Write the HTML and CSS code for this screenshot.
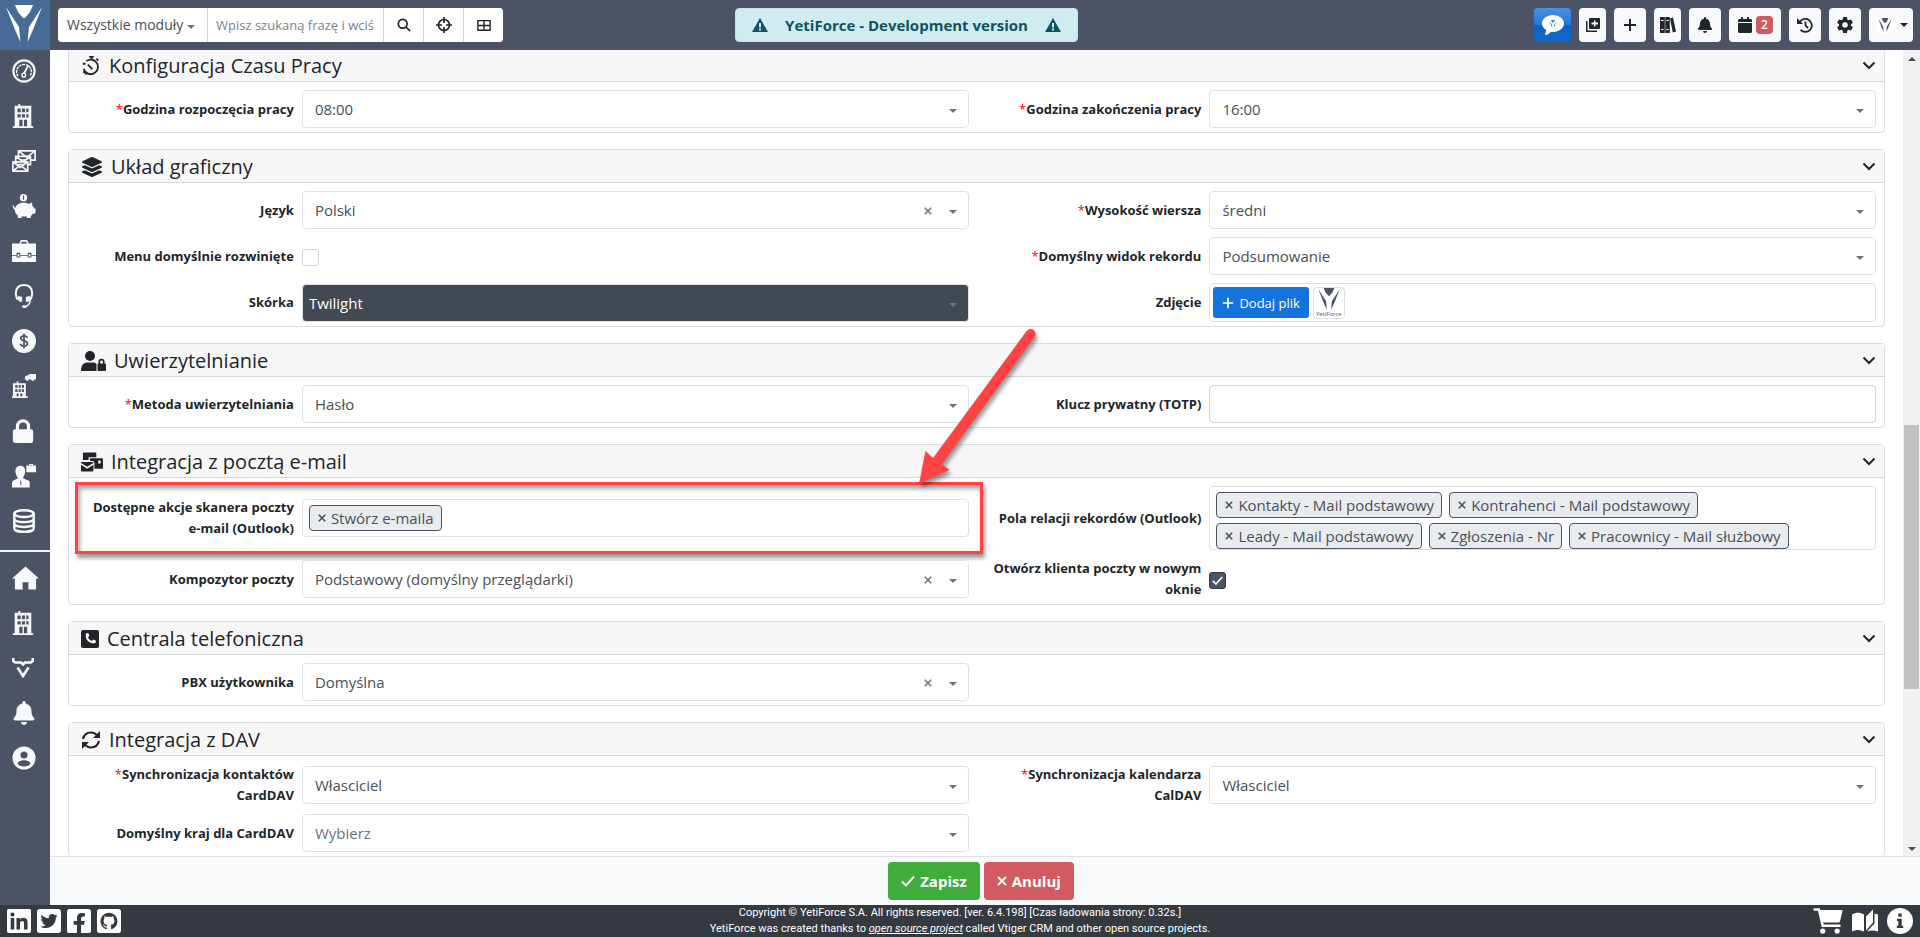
FILE: index.html
```html
<!DOCTYPE html>
<html lang="pl">
<head>
<meta charset="utf-8">
<title>YetiForce</title>
<link rel="stylesheet" href="styles.css">
</head>
<body>
<svg class="sprite" aria-hidden="true">
  <symbol id="yeti" viewBox="0 0 36 37"><path d="M9 0h18l-3 7-5 6h-2l-5-6zM0 2l13 20 1.500 15L9.500 26zM36 2L23 22l-1.500 15 5-11z"/></symbol>
  <symbol id="caret" viewBox="0 0 8 4"><path d="M0 0h8L4 4z"/></symbol>
  <symbol id="chevron" viewBox="0 0 14 9"><path d="M1.500 1.500L7 7l5.500-5.500" fill="none" stroke="currentColor" stroke-width="2"/></symbol>
  <symbol id="cross" viewBox="0 0 10 10"><path d="M1 1l8 8M9 1L1 9" fill="none" stroke="currentColor" stroke-width="2"/></symbol>
  <symbol id="check" viewBox="0 0 14 11"><path d="M1 6l4 4 8-9" fill="none" stroke="currentColor" stroke-width="2"/></symbol>
  <symbol id="plus" viewBox="0 0 14 14"><path d="M7 1v12M1 7h12" fill="none" stroke="currentColor" stroke-width="2"/></symbol>
  <symbol id="search" viewBox="0 0 16 16"><g fill="none" stroke="currentColor" stroke-width="2"><circle cx="6.500" cy="6.500" r="5"/><path d="M10 10l5 5"/></g></symbol>
  <symbol id="target" viewBox="0 0 16 16"><g fill="none" stroke="currentColor" stroke-width="1.700"><circle cx="8" cy="8" r="5.500"/><path d="M8 0v6M8 10v6M0 8h6M10 8h6"/></g></symbol>
  <symbol id="grid" viewBox="0 0 16 14"><path d="M1 2h14v11H1zM8 2v11M1 7.500h14" fill="none" stroke="currentColor" stroke-width="1.600"/></symbol>
  <symbol id="warn" viewBox="0 0 16 14"><path fill-rule="evenodd" d="M8 0l8 14H0zM7 5v4.500h2V5zM7 10.500v2h2v-2z"/></symbol>
  <symbol id="chat" viewBox="0 0 22 20"><path d="M11 0c6 0 11 3.600 11 8.500S17 17 11 17l-2-.2C7.500 18.500 5.500 20 3 20l1.200-5C1.600 13.500 0 11.200 0 8.500 0 3.600 5 0 11 0z"/></symbol>
  <symbol id="addbox" viewBox="0 0 14 14"><path fill-rule="evenodd" d="M4 0h9a1 1 0 0 1 1 1v9a1 1 0 0 1-1 1H4a1 1 0 0 1-1-1V1a1 1 0 0 1 1-1zm4 2.500v2H5.500v2H8v2h1.500v-2H12v-2H9.500v-2zM0 3h1.500v9.500H11V14H0z"/></symbol>
  <symbol id="books" viewBox="0 0 16 16"><path fill-rule="evenodd" d="M0 0h4.800v16H0zM1 3v1h2.500V3zM1 12v1h2.500v-1zM5.300 0h4.500v16H5.300zm1 3v1h2.300V3zm0 9v1h2.300v-1zM10 1.500L13 .5l3 14-3.200 1z"/></symbol>
  <symbol id="bell" viewBox="0 0 448 512"><path d="M224 512c35.320 0 63.970-28.650 63.970-64H160.030c0 35.350 28.650 64 63.970 64zm215.390-149.710c-19.320-20.760-55.470-51.990-55.470-154.290 0-77.700-54.480-139.900-127.940-155.160V32c0-17.670-14.320-32-31.980-32s-31.980 14.330-31.980 32v20.840C118.560 68.100 64.080 130.300 64.080 208c0 102.300-36.150 133.530-55.470 154.290-6 6.450-8.660 14.160-8.610 21.710.11 16.400 12.980 32 32.100 32h383.800c19.120 0 32-15.600 32.100-32 .05-7.550-2.610-15.270-8.610-21.710z"/></symbol>
  <symbol id="calendar" viewBox="0 0 448 512"><path d="M12 192h424c6.600 0 12 5.400 12 12v260c0 26.500-21.500 48-48 48H48c-26.500 0-48-21.500-48-48V204c0-6.600 5.400-12 12-12zm436-44v-36c0-26.500-21.500-48-48-48h-48V12c0-6.600-5.400-12-12-12h-40c-6.600 0-12 5.400-12 12v52H160V12c0-6.600-5.400-12-12-12h-40c-6.600 0-12 5.400-12 12v52H48C21.500 64 0 85.500 0 112v36c0 6.600 5.400 12 12 12h424c6.600 0 12-5.400 12-12z"/></symbol>
  <symbol id="history" viewBox="0 0 16 16"><g fill="none" stroke="currentColor" stroke-width="1.800"><path d="M2.500 5.500A6.500 6.500 0 1 1 3.500 12.800M8.500 4.500v4L11 11"/></g><path d="M0 1v6h6z"/></symbol>
  <symbol id="cog" viewBox="2 2 20 20"><path d="M12 15.500A3.500 3.500 0 0 1 8.500 12 3.500 3.500 0 0 1 12 8.500a3.500 3.500 0 0 1 3.500 3.500 3.500 3.500 0 0 1-3.500 3.500m7.430-2.530c.04-.32.07-.64.07-.97 0-.33-.03-.66-.07-1l2.110-1.630c.19-.15.24-.42.12-.64l-2-3.460c-.12-.22-.39-.31-.61-.22l-2.490 1c-.52-.39-1.060-.73-1.690-.98l-.37-2.650A.506.506 0 0 0 14 2h-4c-.25 0-.46.18-.5.42l-.37 2.650c-.63.25-1.170.59-1.690.98l-2.490-1c-.22-.09-.49 0-.61.22l-2 3.460c-.13.22-.07.49.12.64L4.570 11c-.04.34-.07.67-.07 1 0 .33.03.65.07.97l-2.110 1.660c-.19.15-.25.42-.12.64l2 3.460c.12.22.39.3.61.22l2.490-1.010c.52.4 1.060.74 1.690.99l.37 2.650c.04.24.25.42.5.42h4c.25 0 .46-.18.5-.42l.37-2.650c.63-.26 1.170-.59 1.690-.99l2.490 1.010c.22.08.49 0 .61-.22l2-3.460c.12-.22.07-.49-.12-.64l-2.110-1.660z"/></symbol>

  <symbol id="gauge" viewBox="0 0 26 26"><g fill="none" stroke="currentColor"><circle cx="13" cy="13" r="11.500" stroke-width="2.400"/><path d="M6.500 18.500A8 8 0 1 1 19.500 18.500" stroke-width="1.500" stroke-dasharray="3 .8"/><path d="M17.500 7L13 16" stroke-width="2"/><circle cx="12.800" cy="17.500" r="2" stroke-width="1.500"/></g></symbol>
  <symbol id="building" viewBox="0 0 22 26"><path fill-rule="evenodd" d="M2 2h4V0h2v2h12v22h2v2H0v-2h2zM5 5v4h3.500V5zm4.800 0v4h3.400V5zm4.700 0v4H17V5zM5 11v3.500h3.500V11zm4.800 0v3.500h3.400V11zm4.700 0v3.500H17V11zM7 17v7h3.500v-7zm5 0v7h3.500v-7z"/></symbol>
  <symbol id="mails" viewBox="0 0 26 24"><g fill="#4b5365" stroke="currentColor" stroke-width="1.800"><path d="M7 1h18v10H7zM7 1l9 7 9-7"/><path d="M4 7h16v9H4zM4 7l8 6 8-6"/><path d="M1 13h16v10H1zM1 13l8 6 8-6M1 23l6-5M17 23l-6-5"/></g></symbol>
  <symbol id="piggy" viewBox="0 0 24 25"><circle cx="11.500" cy="3.800" r="3.800"/><path d="M11.500 9c3 0 4.500.6 6 1.500l3-2v3.500c1.200 1 1.700 2 2 3H24v5l-3 .8c-.6 1-1.300 1.600-2 2.100V25h-4v-1.500H9.500V25h-4v-2.500C3.500 21 2.500 19 2.500 16.500 1.500 16 .5 14.500 0 12h1.200c.4 1.300 1 2 1.800 2.300C4.200 10.500 7.500 9 11.500 9z"/><path d="M11.500 1.500v4.600" stroke="#4b5365" stroke-width="1.200"/></symbol>
  <symbol id="case" viewBox="0 0 26 24"><path fill-rule="evenodd" d="M0 4h8l1-3c.2-.6.700-1 1.400-1h5.200c.7 0 1.200.4 1.400 1l1 3h8v12.500h-5V14h-4v2.500H9V14H5v2.500H0zM9.500 4h7L15.500 2h-5zM0 17.500h5V19h4v-1.500h8V19h4v-1.500h5V24H0z"/><path d="M6 15.500h2v2.500H6zM18 15.500h2v2.500h-2z"/></symbol>
  <symbol id="headset" viewBox="0 0 20 26"><g fill="none" stroke="currentColor" stroke-width="2.200"><path d="M3 17C-2 6 4 1.200 10 1.200S22 6 17 17"/><path d="M17 17c-.5 5-3 7-6 7.500" stroke-width="1.500"/></g><path d="M4.500 13L8 14v5l-2 .5c-2-1-3-3-3.500-5zM15.500 13L12 14v5l2 .5c2-1 3-3 3.500-5z"/><rect x="8" y="23" width="5" height="3" rx="1.500"/></symbol>
  <symbol id="dollar" viewBox="0 0 26 26"><circle cx="13" cy="13" r="13"/><path d="M16.500 9.500c-.4-1.300-1.800-2-3.500-2-2 0-3.500 1-3.500 2.600 0 3.800 7.200 1.600 7.200 5.600 0 1.800-1.600 2.800-3.700 2.800-2 0-3.500-.9-3.900-2.500M13 5v16" fill="none" stroke="#4b5365" stroke-width="1.900"/></symbol>
  <symbol id="depot" viewBox="0 0 26 26"><path fill-rule="evenodd" d="M1 10h4V8h2v2h8v14h2v2H0v-2h1zM3.500 12v3H6v-3zm3.700 0v3h2.300v-3zm3.500 0v3H13v-3zM3.500 16.500v3H6v-3zm3.700 0v3h2.300v-3zm3.500 0v3H13v-3zM5 21v3h2.300v-3zm4 0v3h2.300v-3z"/><path d="M14 3l3-2v1l2-2h7v6h-2a1.500 1.500 0 0 1-3 0h-3a1.500 1.500 0 0 1-3 0h-1z"/></symbol>
  <symbol id="lock" viewBox="0 0 22 26"><path d="M5 13V8a6 6 0 0 1 12 0v5" fill="none" stroke="currentColor" stroke-width="3.500"/><rect y="11" width="22" height="15" rx="2.500"/></symbol>
  <symbol id="agent" viewBox="0 0 26 26"><path d="M9 2c3.500 0 5.300 2.300 5.300 5.500S12.500 14 11.800 15.500l6 2.500c1 .5 1.400 1.500 1.400 3v4.500H0V21c0-1.500.5-2.500 1.500-3l5-2.500C5.500 14 3.700 10.700 3.700 7.500S5.500 2 9 2z"/><path fill-rule="evenodd" d="M15.500 1.500H18L19 0h3.500l1 1.500H26V9H15.500zM19 1.500h3.500L22 1h-2.500z"/><path d="M9.500 18v5" stroke="#4b5365"/></symbol>
  <symbol id="database" viewBox="0 0 24 26"><g fill="none" stroke="currentColor" stroke-width="2.600"><ellipse cx="12" cy="5" rx="10.500" ry="3.700"/><path d="M1.500 5v16c0 5 21 5 21 0V5M1.500 10.500c0 5 21 5 21 0M1.500 15.800c0 5 21 5 21 0"/></g></symbol>
  <symbol id="home" viewBox="0 0 28 24"><path d="M14 0l14 12.500h-3V24h-8v-7.500h-6V24H3V12.500H0z"/></symbol>
  <symbol id="bull" viewBox="0 0 22 20"><path d="M1.200 0v3l2 1.500H9l2 2 2-2h5.800l2-1.500V0M5.500 9.500L11 18l5.500-8.500" fill="none" stroke="currentColor" stroke-width="2.600"/></symbol>
  <symbol id="user" viewBox="0 0 26 26"><circle cx="13" cy="13" r="12.500"/><g fill="#4b5365"><circle cx="13" cy="9.700" r="3.800"/><ellipse cx="13" cy="18.800" rx="6.800" ry="3.400"/></g></symbol>

  <symbol id="stopwatch" viewBox="0 0 20 22"><g fill="none" stroke="currentColor" stroke-width="2"><path d="M5 5.500A8 8 0 1 1 2 14M8 1h5M10.500 1v4M6.500 9.500l5 5"/><path d="M1 8.500h3M1.500 17l4 3M16 3l2 2"/></g></symbol>
  <symbol id="layers" viewBox="0 0 512 512"><path d="M12.410 148.020l232.940 105.670c6.800 3.090 14.490 3.090 21.290 0l232.940-105.670c16.550-7.510 16.550-32.520 0-40.030L266.650 2.310a25.607 25.607 0 0 0-21.290 0L12.410 107.980c-16.550 7.510-16.550 32.530 0 40.040zm487.180 88.280l-58.090-26.330-161.640 73.270c-7.560 3.430-15.590 5.170-23.860 5.170s-16.290-1.740-23.860-5.170L70.510 209.970l-58.100 26.330c-16.550 7.500-16.550 32.500 0 40l232.940 105.590c6.800 3.080 14.490 3.080 21.290 0L499.590 276.300c16.550-7.500 16.550-32.500 0-40zm0 127.800l-57.870-26.230-161.860 73.370c-7.560 3.430-15.590 5.170-23.860 5.170s-16.290-1.740-23.860-5.170L70.290 337.870 12.410 364.100c-16.550 7.500-16.550 32.500 0 40l232.940 105.590c6.800 3.080 14.490 3.080 21.290 0L499.590 404.100c16.550-7.500 16.550-32.500 0-40z"/></symbol>
  <symbol id="userlock" viewBox="0 0 25 20"><circle cx="9" cy="5" r="5"/><path d="M0 20c0-6 2.500-8.500 7-8.500h4c2 0 3.500.5 4.500 1.500V20z"/><path d="M18.300 13v-2.200a2.200 2.200 0 0 1 4.400 0V13" fill="none" stroke="currentColor" stroke-width="1.700"/><rect x="16.500" y="12.500" width="8.500" height="7.500" rx="1"/></symbol>
  <symbol id="mailbulk" viewBox="0 0 23 20"><path fill-rule="evenodd" d="M3 0h12a1 1 0 0 1 1 1v4H8v3H2V1a1 1 0 0 1 1-1zM9.500 6H22a1 1 0 0 1 1 1v9a1 1 0 0 1-1 1h-8v-6a2 2 0 0 0-2-2H9.500zM18 8.500v3h2.500v-3zM1 10h11a1 1 0 0 1 1 1l-6.500 4L0 11a1 1 0 0 1 1-1zM0 13l6.500 4 6.500-4v6a1 1 0 0 1-1 1H1a1 1 0 0 1-1-1z"/></symbol>
  <symbol id="phone" viewBox="0 0 18 18"><rect width="18" height="18" rx="2"/><path d="M5 3.500l2.200-.5 1.200 2.800L7 7.200c.8 1.700 2 3 3.800 3.800l1.400-1.400 2.800 1.200-.5 2.200C8.500 14.500 3.500 9.500 5 3.500z" fill="#f7f7f7"/></symbol>
  <symbol id="sync" viewBox="0 0 20 18"><g fill="none" stroke="currentColor" stroke-width="2.200"><path d="M2 8C3 4 6 1.500 10 1.500c3 0 5 1.300 6.500 3.500M18 10c-1 4-4 6.500-8 6.500-3 0-5-1.300-6.500-3.500"/></g><path d="M19 0v7h-7zM1 18v-7h7z"/></symbol>

  <symbol id="linkedin" viewBox="0 32 448 448"><path d="M416 32H31.900C14.300 32 0 46.500 0 64.300v383.400C0 465.500 14.300 480 31.900 480H416c17.600 0 32-14.500 32-32.300V64.300c0-17.800-14.400-32.300-32-32.300zM135.400 416H69V202.200h66.500V416zm-33.200-243c-21.300 0-38.500-17.300-38.500-38.500S80.900 96 102.200 96c21.200 0 38.500 17.300 38.500 38.500 0 21.300-17.200 38.500-38.500 38.500zm282.100 243h-66.400V312c0-24.800-.5-56.700-34.500-56.700-34.600 0-39.900 27-39.900 54.900V416h-66.400V202.200h63.700v29.200h.9c8.900-16.800 30.600-34.500 62.900-34.500 67.200 0 79.700 44.300 79.700 101.900V416z"/></symbol>
  <symbol id="twitter" viewBox="0 32 448 448"><path d="M400 32H48C21.500 32 0 53.500 0 80v352c0 26.500 21.500 48 48 48h352c26.500 0 48-21.500 48-48V80c0-26.500-21.500-48-48-48zm-48.900 158.800c.2 2.800.2 5.700.2 8.500 0 86.700-66 186.600-186.600 186.600-37.200 0-71.700-10.800-100.700-29.400 5.300.6 10.400.8 15.800.8 30.700 0 58.900-10.400 81.400-28-28.800-.6-53-19.500-61.300-45.500 10.100 1.500 19.200 1.500 29.600-1.200-30-6.100-52.500-32.500-52.500-64.400v-.8c8.700 4.900 18.900 7.900 29.600 8.300a65.447 65.447 0 0 1-29.200-54.600c0-12.200 3.200-23.400 8.900-33.100 32.300 39.800 80.800 65.800 135.200 68.600-9.300-44.500 24-80.600 64-80.600 18.900 0 35.900 7.900 47.900 20.700 14.800-2.800 29-8.300 41.600-15.800-4.900 15.200-15.200 28-28.800 36.100 13.200-1.400 26-5.100 37.800-10.200-8.900 13.100-20.100 24.700-32.900 34z"/></symbol>
  <symbol id="facebook" viewBox="0 32 448 448"><path d="M400 32H48A48 48 0 0 0 0 80v352a48 48 0 0 0 48 48h137.250V327.690h-63V256h63v-54.640c0-62.150 37-96.480 93.670-96.480 27.140 0 55.520 4.840 55.520 4.840v61h-31.270c-30.810 0-40.420 19.120-40.420 38.730V256h68.780l-11 71.690h-57.780V480H400a48 48 0 0 0 48-48V80a48 48 0 0 0-48-48z"/></symbol>
  <symbol id="github" viewBox="-5 -5 34 34"><rect x="-5" y="-5" width="34" height="34" rx="4"/><path fill="#343a40" d="M12 .297c-6.630 0-12 5.373-12 12 0 5.303 3.438 9.800 8.205 11.385.6.113.82-.258.82-.577 0-.285-.01-1.040-.015-2.040-3.338.724-4.042-1.610-4.042-1.610C4.422 18.070 3.633 17.700 3.633 17.700c-1.087-.744.084-.729.084-.729 1.205.084 1.838 1.236 1.838 1.236 1.070 1.835 2.809 1.305 3.495.998.108-.776.417-1.305.76-1.605-2.665-.3-5.466-1.332-5.466-5.930 0-1.310.465-2.380 1.235-3.220-.135-.303-.54-1.523.105-3.176 0 0 1.005-.322 3.300 1.230.96-.267 1.980-.399 3-.405 1.020.006 2.040.138 3 .405 2.280-1.552 3.285-1.230 3.285-1.230.645 1.653.24 2.873.12 3.176.765.84 1.230 1.910 1.230 3.220 0 4.610-2.805 5.625-5.475 5.920.42.36.81 1.096.81 2.220 0 1.606-.015 2.896-.015 3.286 0 .315.21.69.825.57C20.565 22.092 24 17.592 24 12.297c0-6.627-5.373-12-12-12"/></symbol>
  <symbol id="cart" viewBox="0 0 30 27"><path d="M1 1.500h4.500l4 17H27" fill="none" stroke="currentColor" stroke-width="2.500" stroke-linecap="round"/><path d="M5.500 2H28.500a1.500 1.500 0 0 1 1.400 2l-2.500 10c-.2.700-.7 1-1.400 1H8.500z"/><circle cx="9.500" cy="24" r="2.700"/><circle cx="24.500" cy="24" r="2.700"/></symbol>
  <symbol id="book" viewBox="0 0 26 23"><path d="M0 5c4-2.500 8-2.500 12 0v17c-4-2-7.500-2-12 0zM14 7l7-7v13l-7 8zM22.500 4L26 5v17c-4-1.500-7-1.500-11 0l7.500-8z"/></symbol>
  <symbol id="info" viewBox="0 0 26 26"><circle cx="13" cy="13" r="13"/><path d="M11.300 5.500h3.400v3.200h-3.400zM10 10.700h4.700v7h1.500V20H9.800v-2.300h1.500V13H10z" fill="#343a40"/></symbol>
</svg>

<header class="topbar">
  <a class="brand" href="#" aria-label="YetiForce"><svg class="i36"><use href="#yeti"/></svg></a>
  <form class="search">
    <span class="pick modules">
      <select aria-label="Moduł"><option>Wszystkie moduły</option></select>
      <svg class="caret"><use href="#caret"/></svg>
    </span>
    <input type="text" aria-label="Szukaj" placeholder="Wpisz szukaną frazę i wciśnij Enter">
    <button type="button" aria-label="Szukaj"><svg class="i14"><use href="#search"/></svg></button>
    <button type="button" aria-label="Cel"><svg class="i16"><use href="#target"/></svg></button>
    <button type="button" aria-label="Zaawansowane"><svg class="i14"><use href="#grid"/></svg></button>
  </form>
  <div class="notice"><svg class="i16"><use href="#warn"/></svg><strong>YetiForce - Development version</strong><svg class="i16"><use href="#warn"/></svg></div>
  <div class="tools">
    <button type="button" class="tool chat" aria-label="Czat"><svg class="i22"><use href="#chat"/></svg><svg class="mini"><use href="#yeti"/></svg></button>
    <button type="button" class="tool slim" aria-label="Nowe okno"><svg class="i14"><use href="#addbox"/></svg></button>
    <button type="button" class="tool" aria-label="Dodaj"><svg class="i14"><use href="#plus"/></svg></button>
    <button type="button" class="tool slim" aria-label="Biblioteka"><svg class="i16"><use href="#books"/></svg></button>
    <button type="button" class="tool" aria-label="Powiadomienia"><svg class="i16"><use href="#bell"/></svg></button>
    <button type="button" class="tool wide" aria-label="Kalendarz"><svg class="i16"><use href="#calendar"/></svg><span class="badge">2</span></button>
    <button type="button" class="tool" aria-label="Historia"><svg class="i16"><use href="#history"/></svg></button>
    <button type="button" class="tool" aria-label="Ustawienia"><svg class="i16"><use href="#cog"/></svg></button>
    <button type="button" class="tool me" aria-label="Konto"><span class="avatar"><svg class="i14"><use href="#yeti"/></svg></span><svg class="caret"><use href="#caret"/></svg></button>
  </div>
</header>

<div class="middle">
  <nav class="side">
    <ul>
      <li><a href="#" aria-label="Pulpit"><svg><use href="#gauge"/></svg></a></li>
      <li><a href="#" aria-label="Firmy"><svg class="left"><use href="#building"/></svg></a></li>
      <li><a href="#" aria-label="Poczta"><svg><use href="#mails"/></svg></a></li>
      <li><a href="#" aria-label="Finanse"><svg><use href="#piggy"/></svg></a></li>
      <li><a href="#" aria-label="Projekty"><svg><use href="#case"/></svg></a></li>
      <li><a href="#" aria-label="Wsparcie"><svg><use href="#headset"/></svg></a></li>
      <li><a href="#" aria-label="Księgowość"><svg><use href="#dollar"/></svg></a></li>
      <li><a href="#" aria-label="Logistyka"><svg><use href="#depot"/></svg></a></li>
      <li><a href="#" aria-label="Bezpieczeństwo"><svg class="left"><use href="#lock"/></svg></a></li>
      <li><a href="#" aria-label="Kadry"><svg><use href="#agent"/></svg></a></li>
      <li><a href="#" aria-label="Bazy danych"><svg><use href="#database"/></svg></a></li>
    </ul>
    <hr>
    <ul>
      <li><a href="#" aria-label="Start"><svg class="home"><use href="#home"/></svg></a></li>
      <li><a href="#" aria-label="Firma"><svg class="left"><use href="#building"/></svg></a></li>
      <li><a href="#" aria-label="Vtiger"><svg class="bull"><use href="#bull"/></svg></a></li>
      <li><a href="#" aria-label="Alerty"><svg><use href="#bell"/></svg></a></li>
      <li><a href="#" aria-label="Profil"><svg><use href="#user"/></svg></a></li>
    </ul>
  </nav>

  <div class="work">
    <div class="viewport">
      <main class="form">
        <section class="panel">
          <h2><svg class="w20"><use href="#stopwatch"/></svg>Konfiguracja Czasu Pracy<button type="button" class="fold" aria-label="Zwiń"><svg><use href="#chevron"/></svg></button></h2>
          <div class="fields">
            <div class="field"><label for="f1"><span class="req">*</span>Godzina rozpoczęcia pracy</label><span class="pick"><select id="f1"><option>08:00</option></select><svg class="caret"><use href="#caret"/></svg></span></div>
            <div class="field"><label for="f2"><span class="req">*</span>Godzina zakończenia pracy</label><span class="pick"><select id="f2"><option>16:00</option></select><svg class="caret"><use href="#caret"/></svg></span></div>
          </div>
        </section>

        <section class="panel">
          <h2><svg class="w22"><use href="#layers"/></svg>Układ graficzny<button type="button" class="fold" aria-label="Zwiń"><svg><use href="#chevron"/></svg></button></h2>
          <div class="fields">
            <div class="field"><label for="f3">Język</label><span class="pick"><select id="f3"><option>Polski</option></select><button type="button" class="clear" aria-label="Wyczyść"><svg><use href="#cross"/></svg></button><svg class="caret"><use href="#caret"/></svg></span></div>
            <div class="field"><label for="f4"><span class="req">*</span>Wysokość wiersza</label><span class="pick"><select id="f4"><option>średni</option></select><svg class="caret"><use href="#caret"/></svg></span></div>
            <div class="field"><label for="f5">Menu domyślnie rozwinięte</label><span class="tick"><input type="checkbox" id="f5"></span></div>
            <div class="field"><label for="f6"><span class="req">*</span>Domyślny widok rekordu</label><span class="pick"><select id="f6"><option>Podsumowanie</option></select><svg class="caret"><use href="#caret"/></svg></span></div>
            <div class="field"><label for="f7">Skórka</label><span class="pick dark"><select id="f7"><option>Twilight</option></select><svg class="caret"><use href="#caret"/></svg></span></div>
            <div class="field"><label for="f8">Zdjęcie</label><div class="box files"><button type="button" id="f8" class="add"><svg class="i12"><use href="#plus"/></svg>Dodaj plik</button><span class="thumb"><svg><use href="#yeti"/></svg><small>YetiForce</small></span></div></div>
          </div>
        </section>

        <section class="panel">
          <h2><svg class="w24"><use href="#userlock"/></svg>Uwierzytelnianie<button type="button" class="fold" aria-label="Zwiń"><svg><use href="#chevron"/></svg></button></h2>
          <div class="fields">
            <div class="field"><label for="f9"><span class="req">*</span>Metoda uwierzytelniania</label><span class="pick"><select id="f9"><option>Hasło</option></select><svg class="caret"><use href="#caret"/></svg></span></div>
            <div class="field"><label for="f10">Klucz prywatny (TOTP)</label><input type="text" id="f10" class="box plain"></div>
          </div>
        </section>

        <section class="panel">
          <h2><svg class="w22"><use href="#mailbulk"/></svg>Integracja z pocztą e-mail<button type="button" class="fold" aria-label="Zwiń"><svg><use href="#chevron"/></svg></button></h2>
          <div class="fields">
            <div class="field">
              <span class="label" id="l11">Dostępne akcje skanera poczty e-mail (Outlook)</span>
              <div class="box tags" role="group" aria-labelledby="l11"><button type="button" class="tag"><svg><use href="#cross"/></svg>Stwórz e-maila</button></div>
              <div class="callout">
                <svg class="arrow" viewBox="0 0 140 170"><path fill="#ff4343" d="M124.600 12A5 5 0 0 1 132.600 18L40 145l7.500 6L17 165l6.500-33 7.500 7z"/></svg>
              </div>
            </div>
            <div class="field">
              <span class="label" id="l12">Pola relacji rekordów (Outlook)</span>
              <div class="box tags" role="group" aria-labelledby="l12">
                <button type="button" class="tag"><svg><use href="#cross"/></svg>Kontakty - Mail podstawowy</button>
                <button type="button" class="tag"><svg><use href="#cross"/></svg>Kontrahenci - Mail podstawowy</button>
                <button type="button" class="tag"><svg><use href="#cross"/></svg>Leady - Mail podstawowy</button>
                <button type="button" class="tag"><svg><use href="#cross"/></svg>Zgłoszenia - Nr</button>
                <button type="button" class="tag"><svg><use href="#cross"/></svg>Pracownicy - Mail służbowy</button>
              </div>
            </div>
            <div class="field"><label for="f13">Kompozytor poczty</label><span class="pick"><select id="f13"><option>Podstawowy (domyślny przeglądarki)</option></select><button type="button" class="clear" aria-label="Wyczyść"><svg><use href="#cross"/></svg></button><svg class="caret"><use href="#caret"/></svg></span></div>
            <div class="field"><label for="f14">Otwórz klienta poczty w nowym oknie</label><span class="tick"><input type="checkbox" id="f14" checked><svg><use href="#check"/></svg></span></div>
          </div>
        </section>

        <section class="panel">
          <h2><svg class="w18"><use href="#phone"/></svg>Centrala telefoniczna<button type="button" class="fold" aria-label="Zwiń"><svg><use href="#chevron"/></svg></button></h2>
          <div class="fields">
            <div class="field"><label for="f15">PBX użytkownika</label><span class="pick"><select id="f15"><option>Domyślna</option></select><button type="button" class="clear" aria-label="Wyczyść"><svg><use href="#cross"/></svg></button><svg class="caret"><use href="#caret"/></svg></span></div>
          </div>
        </section>

        <section class="panel">
          <h2><svg class="w20"><use href="#sync"/></svg>Integracja z DAV<button type="button" class="fold" aria-label="Zwiń"><svg><use href="#chevron"/></svg></button></h2>
          <div class="fields">
            <div class="field"><label for="f16"><span class="req">*</span>Synchronizacja kontaktów CardDAV</label><span class="pick"><select id="f16"><option>Własciciel</option></select><svg class="caret"><use href="#caret"/></svg></span></div>
            <div class="field"><label for="f17"><span class="req">*</span>Synchronizacja kalendarza CalDAV</label><span class="pick"><select id="f17"><option>Własciciel</option></select><svg class="caret"><use href="#caret"/></svg></span></div>
            <div class="field"><label for="f18">Domyślny kraj dla CardDAV</label><span class="pick empty"><select id="f18"><option>Wybierz</option></select><svg class="caret"><use href="#caret"/></svg></span></div>
          </div>
        </section>
      </main>
      <div class="rail" aria-hidden="true">
        <svg class="up"><use href="#caret"/></svg>
        <div class="track"><span class="before"></span><span class="thumbbar"></span><span class="after"></span></div>
        <svg><use href="#caret"/></svg>
      </div>
    </div>
    <div class="actions">
      <button type="submit" class="save"><svg class="i14"><use href="#check"/></svg>Zapisz</button>
      <button type="reset" class="cancel"><svg class="i10"><use href="#cross"/></svg>Anuluj</button>
    </div>
  </div>
</div>

<footer class="foot">
  <div class="social">
    <a href="#" aria-label="LinkedIn"><svg><use href="#linkedin"/></svg></a>
    <a href="#" aria-label="Twitter"><svg><use href="#twitter"/></svg></a>
    <a href="#" aria-label="Facebook"><svg><use href="#facebook"/></svg></a>
    <a href="#" aria-label="GitHub"><svg><use href="#github"/></svg></a>
  </div>
  <p>Copyright © YetiForce S.A. All rights reserved. [ver. 6.4.198] [Czas ładowania strony: 0.32s.]<br>YetiForce was created thanks to <a href="#">open source project</a> called Vtiger CRM and other open source projects.</p>
  <div class="help">
    <a href="#" aria-label="Sklep"><svg class="w30"><use href="#cart"/></svg></a>
    <a href="#" aria-label="Dokumentacja"><svg><use href="#book"/></svg></a>
    <a href="#" aria-label="Informacje"><svg><use href="#info"/></svg></a>
  </div>
</footer>
</body>
</html>
```

FILE: styles.css
```css
* { box-sizing: border-box; }
html, body { height: 100%; }
body {
  margin: 0;
  display: flex;
  flex-direction: column;
  overflow: hidden;
  background: #fff;
  color: #212529;
  font: 15px/24px "Open Sans", "Noto Sans", sans-serif;
}
button, input, select { font: inherit; color: inherit; margin: 0; }
button { cursor: pointer; }
svg { fill: currentColor; flex: none; display: block; }
.sprite { position: absolute; width: 0; height: 0; }

.i10 { width: 10px; height: 10px; }
.i12 { width: 12px; height: 12px; }
.i14 { width: 14px; height: 14px; }
.i16 { width: 16px; height: 16px; }
.i22 { width: 22px; height: 20px; }
.i36 { width: 36px; height: 37px; }
.w18 { width: 18px; height: 18px; }
.w20 { width: 20px; height: 20px; }
.w22 { width: 22px; height: 20px; }
.w24 { width: 25px; height: 20px; }
.caret { width: 8px; height: 4px; }

/* Top bar */
.topbar {
  display: grid;
  grid-template-columns: 1fr auto 1fr;
  align-items: center;
  height: 50px;
  padding-right: 7px;
  background: #4b5365;
  position: relative;
}
.brand {
  position: absolute;
  left: 0;
  top: 0;
  width: 50px;
  height: 50px;
  display: flex;
  align-items: center;
  justify-content: center;
  background: #466b96;
  color: #fff;
  padding: 0 2px 3px 0;
}
.search {
  display: flex;
  height: 34px;
  margin-left: 58px;
  justify-self: start;
  background: #fff;
  border-radius: 4px;
  overflow: hidden;
  font-size: 14px;
}
.search > * + * { border: 0; border-left: 1px solid #ced4da; background: #fff; }
.search input { width: 176px; padding: 0 8px; outline: 0; font-size: 13px; color: #495057; }
.search input::placeholder { color: #7b828a; }
.search button { width: 40px; padding: 0; display: flex; align-items: center; justify-content: center; }
.modules { width: 149px; }
.search .modules select { height: 34px; border: 0; padding-left: 9px; font-size: 14px; }
.notice {
  display: flex;
  align-items: center;
  gap: 17px;
  height: 34px;
  margin-right: 100px;
  padding: 0 16px;
  border: 1px solid #bee5eb;
  border-radius: 4px;
  background: #d1ecf1;
  color: #0c5460;
  font-size: 15px;
}
.notice svg { height: 14px; }
.tools { display: flex; gap: 8px; justify-self: end; }
.tool {
  display: flex;
  align-items: center;
  justify-content: center;
  gap: 3px;
  position: relative;
  width: 32px;
  height: 34px;
  padding: 0;
  border: 0;
  border-radius: 4px;
  background: #f8f9fa;
  color: #212529;
}
.tool.slim { width: 27px; }
.tool.wide { width: 52px; }
.tool.me { width: 44px; gap: 5px; }
.tool.chat { width: 37px; background: linear-gradient(#4c92e0, #1f78d8 50%, #0f62bf 50%, #1169cc); color: #fff; }
.mini { position: absolute; left: 15px; top: 12px; width: 8px; height: 8px; color: #3b82d0; }
.badge {
  padding: 0 5px;
  border-radius: 4px;
  background: #d15b60;
  color: #fff;
  font-size: 12px;
  font-weight: 600;
  line-height: 18px;
}
.avatar {
  display: flex;
  align-items: center;
  justify-content: center;
  width: 20px;
  height: 20px;
  border-radius: 50%;
  background: #fff;
  color: #4b5365;
}

/* Side menu */
.middle { display: flex; flex: 1; min-height: 0; }
.side { width: 50px; flex: none; background: #4b5365; color: #f8f9fa; }
.side ul { list-style: none; margin: 0; padding: 0; }
.side li a { display: flex; align-items: center; height: 45px; padding: 0 12px 4px; color: inherit; }
.side svg { width: 24px; height: 24px; }
.side .left { width: 22px; }
.side .home { width: 27px; }
.side .bull { width: 22px; height: 20px; }
.side hr { height: 2px; margin: 5px 0; border: 0; background: #f8f9fa; }

/* Form area */
.work { display: flex; flex-direction: column; flex: 1; min-width: 0; }
.viewport { display: flex; flex: 1; min-height: 0; overflow: hidden; }
.form {
  display: flex;
  flex-direction: column;
  gap: 16px;
  flex: 1;
  min-width: 0;
  margin-top: -2px;
  padding: 0 18px;
}
.panel { border: 1px solid #dcdde0; border-radius: 4px; flex: none; }
.panel h2 {
  display: flex;
  align-items: center;
  gap: 8px;
  margin: 0;
  height: 33px;
  padding: 1px 8px 0 12px;
  border-bottom: 1px solid #d8d9db;
  background: #f7f7f7;
  font-size: 20px;
  line-height: 30px;
  font-weight: 400;
}
.fold { margin-left: auto; padding: 0; border: 0; background: none; }
.fold svg { width: 14px; height: 9px; }
.fields { display: grid; grid-template-columns: 1fr 1fr; padding-top: 4px; }
.field {
  display: grid;
  grid-template-columns: 25% minmax(0, 1fr);
  column-gap: 8px;
  align-items: center;
  min-height: 46px;
  padding: 4px 8px 4px 0;
  position: relative;
}
.field label, .label { padding-left: 12px; text-align: right; font-size: 13px; line-height: 21px; font-weight: 700; }
.req { color: #f00; font-weight: 400; }
.pick { position: relative; display: block; }
.pick select {
  display: block;
  appearance: none;
  width: 100%;
  height: 38px;
  padding: 0 12px;
  border: 1px solid #dee2e6;
  border-radius: 4px;
  background: #fff;
  color: #495057;
}
.pick .caret { position: absolute; right: 12px; top: 50%; color: #6c757d; pointer-events: none; }
.pick.empty select { color: #6c757d; }
.pick.dark select { background: #424952; color: #fff; padding-left: 6px; }
.clear { position: absolute; right: 37px; top: 16px; padding: 0; border: 0; background: none; color: #6c757d; }
.clear svg { width: 8px; height: 8px; }
.box { min-height: 38px; border: 1px solid #dee2e6; border-radius: 4px; background: #fff; }
.plain { width: 100%; border-color: #ced4da; padding: 0 12px; }
.field input[type="checkbox"] {
  appearance: none;
  display: block;
  width: 17px;
  height: 17px;
  border: 1px solid #ced4da;
  border-radius: 3px;
  background: #fff;
}
.field input[type="checkbox"]:checked { background: #4b5365; border-color: #343a40; }
.tick { position: relative; display: block; width: 17px; margin-top: 3px; color: #fff; }
.tick svg { position: absolute; left: 3px; top: 4px; width: 11px; height: 9px; pointer-events: none; }
.files { display: flex; align-items: center; gap: 4px; min-height: 39px; padding: 0 3px; }
.add {
  display: flex;
  align-items: center;
  gap: 5px;
  height: 31px;
  padding: 0 9px;
  border: 0;
  border-radius: 3px;
  background: #1473da;
  color: #fff;
  font-size: 13px;
}
.thumb {
  display: flex;
  flex-direction: column;
  align-items: center;
  width: 32px;
  height: 32px;
  border: 1px solid #dee2e6;
  border-radius: 4px;
  color: #4b5365;
}
.thumb svg { width: 22px; height: 22px; }
.thumb small { font-size: 6px; line-height: 8px; }
.tags { display: flex; flex-wrap: wrap; align-content: flex-start; gap: 5px 7px; padding: 5px 6px 0; }
.tag {
  display: flex;
  align-items: center;
  gap: 5px;
  height: 26px;
  padding: 0 7px 0 8px;
  border: 1px solid #4b5365;
  border-radius: 4px;
  background: #e9ecef;
  color: #495057;
}
.tag svg { width: 8px; height: 8px; }

/* Annotation */
.callout {
  position: absolute;
  left: 6px;
  right: -6px;
  top: 0;
  bottom: 0;
  border: 3px solid #ff4343;
  box-shadow: 2px 4px 4px rgba(0, 0, 0, .4), inset 2px 4px 4px rgba(0, 0, 0, .35);
  pointer-events: none;
}
.arrow {
  position: absolute;
  right: -62px;
  bottom: calc(100% - 4px);
  width: 140px;
  height: 170px;
  filter: drop-shadow(2px 4px 2px rgba(0, 0, 0, .4));
}

/* Scroll bar */
.rail {
  display: flex;
  flex-direction: column;
  align-items: center;
  justify-content: space-between;
  width: 17px;
  padding: 7px 0 5px;
  background: #f1f1f1;
  color: #505050;
}
.rail svg { width: 8px; height: 4px; }
.rail .up { transform: rotate(180deg); }
.track { display: flex; flex-direction: column; flex: 1; width: 15px; padding: 6px 0; }
.before { flex: 357; }
.thumbbar { flex: 263; background: #c1c1c1; }
.after { flex: 152; }

/* Action bar */
.actions {
  display: flex;
  justify-content: center;
  align-items: center;
  gap: 4px;
  height: 49px;
  padding-bottom: 1px;
  padding-right: 8px;
  border-top: 1px solid #dee2e6;
  background: #f8f9fa;
}
.actions button {
  display: flex;
  align-items: center;
  gap: 5px;
  height: 38px;
  padding: 0 13px;
  border: 0;
  border-radius: 4px;
  color: #fff;
  font-weight: 700;
}
.actions .save { background: #40ac3b; }
.actions .cancel { background: #d15b60; }

/* Footer */
.foot {
  display: grid;
  grid-template-columns: 1fr auto 1fr;
  align-items: center;
  height: 32px;
  padding: 0 7px;
  background: #343a40;
  color: #fff;
}
.foot a { color: inherit; }
.foot p { margin: 0; text-align: center; font-family: Roboto, "Open Sans", sans-serif; font-size: 11px; line-height: 16px; }
.foot p a { font-style: italic; }
.social { display: flex; gap: 6px; }
.social svg { width: 24px; height: 24px; }
.help { display: flex; align-items: center; justify-content: flex-end; gap: 9px; }
.help svg { width: 26px; height: 26px; }
.help .w30 { width: 30px; }
```
